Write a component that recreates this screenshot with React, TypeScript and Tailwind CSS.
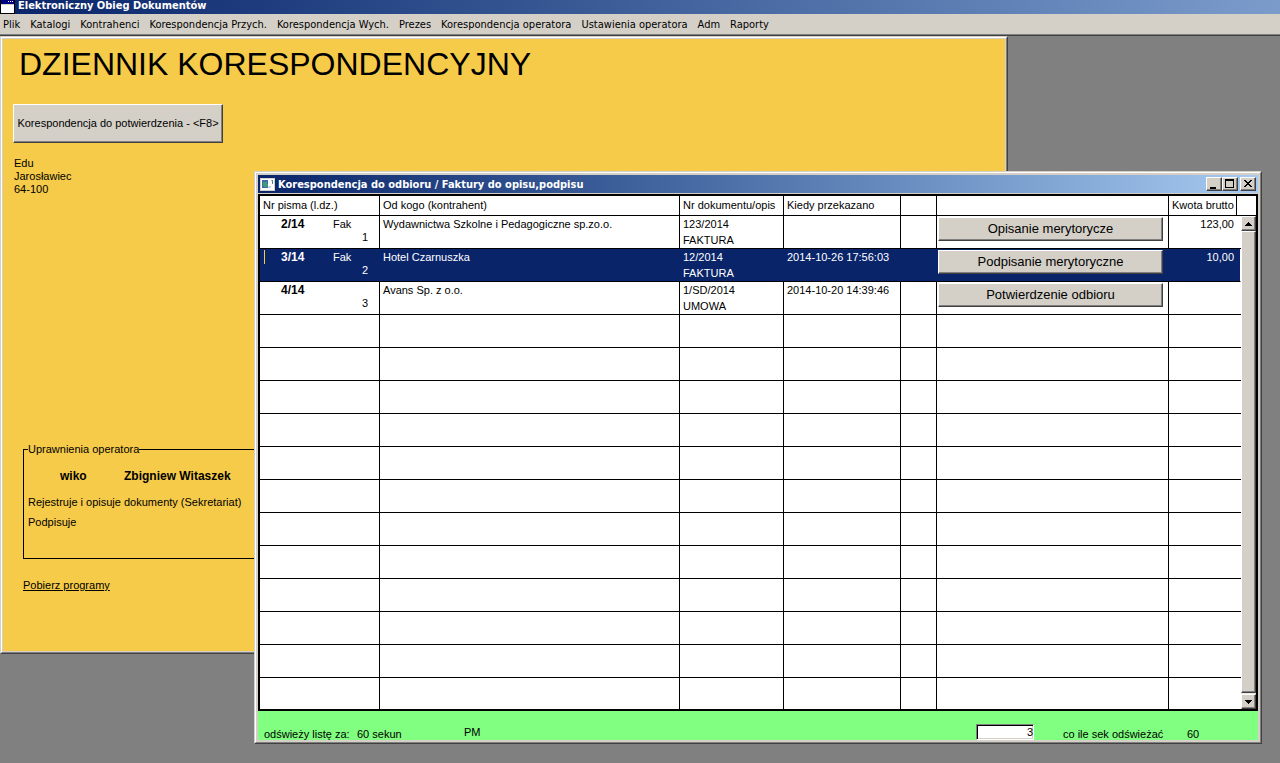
import * as React from "react";

const menu = [
	"Plik",
	"Katalogi",
	"Kontrahenci",
	"Korespondencja Przych.",
	"Korespondencja Wych.",
	"Prezes",
	"Korespondencja operatora",
	"Ustawienia operatora",
	"Adm",
	"Raporty",
];

type Letter = {
	nr: string;
	kind: string;
	lp: number;
	from: string;
	doc: string;
	desc: string;
	date: string;
	action: string;
	amount: string;
	selected?: boolean;
};

const letters: Letter[] = [
	{
		nr: "2/14",
		kind: "Fak",
		lp: 1,
		from: "Wydawnictwa Szkolne i Pedagogiczne sp.zo.o.",
		doc: "123/2014",
		desc: "FAKTURA",
		date: "",
		action: "Opisanie merytorycze",
		amount: "123,00",
	},
	{
		nr: "3/14",
		kind: "Fak",
		lp: 2,
		from: "Hotel Czarnuszka",
		doc: "12/2014",
		desc: "FAKTURA",
		date: "2014-10-26 17:56:03",
		action: "Podpisanie merytoryczne",
		amount: "10,00",
		selected: true,
	},
	{
		nr: "4/14",
		kind: "",
		lp: 3,
		from: "Avans Sp. z o.o.",
		doc: "1/SD/2014",
		desc: "UMOWA",
		date: "2014-10-20 14:39:46",
		action: "Potwierdzenie odbioru",
		amount: "",
	},
];

const emptyRows = Array.from({ length: 12 }, (_, i) => i);

const raised =
	"bg-[#d4d0c8] border border-t-white border-l-white border-r-[#404040] border-b-[#404040] shadow-[inset_-1px_-1px_0_#808080]";

const tahoma = "font-['DejaVu_Sans_Condensed','DejaVu_Sans',sans-serif]";

const AppIcon = () => (
	<svg className="w-4 h-4 shrink-0" viewBox="0 0 16 16" shapeRendering="crispEdges">
		<rect width="15" height="16" fill="#000" />
		<rect x="1" y="1" width="13" height="14" fill="#fff" />
		<rect x="1" y="1" width="13" height="5" fill="#000080" />
		<path d="M8 3h1v1H8zM10 3h1v1h-1zM12 3h1v1h-1z" fill="#fff" />
		<path d="M1 6h13v1H1z" fill="#d4d0c8" />
	</svg>
);

const WindowIcon = () => (
	<svg className="w-4 h-4 shrink-0" viewBox="0 0 16 16" shapeRendering="crispEdges">
		<rect y="2" width="15" height="13" fill="#d4d0c8" />
		<rect x="1" y="3" width="13" height="11" fill="#fff" />
		<rect x="2" y="4" width="6" height="8" fill="#3c6ea5" />
		<path d="M3 6h4v2h1v3H4v-1H3z" fill="#3f9a78" />
		<rect x="8" y="10" width="3" height="2" fill="#c8d8e8" />
		<path d="M12 4h1v4h-1z" fill="#4c8c8c" />
		<path d="M11 4h1v1h-1z" fill="#8cb4c8" />
	</svg>
);

const TitleButton = ({ label, children }: { label: string; children: React.ReactNode }) => (
	<button type="button" aria-label={label} className={`w-4 h-3.5 ${raised}`}>
		<svg className="w-3.5 h-3" viewBox="0 0 14 12" shapeRendering="crispEdges">
			{children}
		</svg>
	</button>
);

const MainWindow = () => (
	<section className="mr-[272px] border border-t-[#d4d0c8] border-l-[#d4d0c8] border-r-[#404040] border-b-[#404040]">
		<div className="border border-t-white border-l-white border-r-[#808080] border-b-[#808080] bg-[#d4d0c8] p-px">
			<div className="bg-[#f6cb4a] pt-[5px] pb-[59px] px-2.5">
				<h1 className="pl-1.5 text-[32px] leading-10 whitespace-nowrap">DZIENNIK KORESPONDENCYJNY</h1>
				<button type="button" className={`mt-5 w-[210px] h-[39px] whitespace-nowrap ${raised}`}>
					Korespondencja do potwierdzenia - &lt;F8&gt;
				</button>
				<address className="mt-3.5 pl-px not-italic leading-[13px]">
					<div>Edu</div>
					<div>Jarosławiec</div>
					<div>64-100</div>
				</address>
				<fieldset className="mt-[247px] ml-2.5 w-[320px] border border-black px-1">
					<legend className="leading-[13px]">Uprawnienia operatora</legend>
					<div className="mt-3 flex pl-8 text-[12px] leading-4 font-bold">
						<span className="w-16">wiko</span>
						<span>Zbigniew Witaszek</span>
					</div>
					<p className="mt-2 leading-5">Rejestruje i opisuje dokumenty (Sekretariat)</p>
					<p className="mb-[26px] leading-5">Podpisuje</p>
				</fieldset>
				<a href="#programy" className="mt-[19px] ml-2.5 block w-fit leading-[14px] underline">
					Pobierz programy
				</a>
			</div>
		</div>
	</section>
);

const ScrollBar = () => (
	<div className="w-[15px] shrink-0 flex flex-col">
		<div className="h-5 bg-white border-b border-black"></div>
		<button type="button" aria-label="W górę" className={`h-[15px] flex items-center justify-center ${raised}`}>
			<svg className="w-[7px] h-1" viewBox="0 0 7 4" shapeRendering="crispEdges">
				<path d="M3 0h1v1h1v1h1v1h1v1H0V3h1V2h1V1h1z" />
			</svg>
		</button>
		<div className={`flex-1 ${raised}`}></div>
		<div className="h-px bg-[#eae8e4]"></div>
		<button type="button" aria-label="W dół" className={`h-[15px] flex items-center justify-center ${raised}`}>
			<svg className="w-[7px] h-1" viewBox="0 0 7 4" shapeRendering="crispEdges">
				<path d="M0 0h7v1H6v1H5v1H4v1H3V3H2V2H1V1H0z" />
			</svg>
		</button>
	</div>
);

const cell = "border-r border-b border-black px-[3px] align-top";
const selectedCell = "border-r border-b border-r-[#0a246a] border-b-black px-[3px] align-top";
const headCell = "border-r border-b border-black px-[3px] pt-px align-top font-normal";

const LetterRow = ({ letter }: { letter: Letter }) => {
	const td = letter.selected ? selectedCell : cell;

	return (
		<tr className={letter.selected ? "h-[33px] bg-[#0a246a] text-white" : "h-[33px]"}>
			<td className={td}>
				<div className="flex">
					<span className="w-[18px] pl-px py-px">
						{letter.selected && <span className="block h-3.5 border-l border-[#f6cb4a]"></span>}
					</span>
					<b className="w-[52px] text-[12px]">{letter.nr}</b>
					<span>{letter.kind}</span>
				</div>
				<div className="pr-2 text-right leading-[10px]">{letter.lp}</div>
			</td>
			<td className={td}>{letter.from}</td>
			<td className={td}>
				<div>{letter.doc}</div>
				<div>{letter.desc}</div>
			</td>
			<td className={td}>{letter.date}</td>
			<td className={td}></td>
			<td
				className={
					letter.selected
						? "border-r border-b border-r-[#0a246a] border-b-black pl-px pr-[5px] pt-px align-top"
						: "border-r border-b border-black pl-px pr-[5px] pt-px align-top"
				}
			>
				<button type="button" className={`block w-full h-6 text-[13px] text-black ${raised}`}>
					{letter.action}
				</button>
			</td>
			<td
				colSpan={2}
				className={
					letter.selected
						? "border-r border-b border-r-white border-b-black pr-1.5 text-right align-top"
						: "border-b border-black pr-[7px] text-right align-top"
				}
			>
				{letter.amount}
			</td>
		</tr>
	);
};

const LettersTable = () => (
	<table className="w-full min-w-0 flex-1 table-fixed border-separate border-spacing-0 bg-white leading-4 whitespace-nowrap">
		<colgroup>
			<col className="w-[120px]" />
			<col />
			<col className="w-[104px]" />
			<col className="w-[117px]" />
			<col className="w-9" />
			<col className="w-[232px]" />
			<col className="w-[68px]" />
			<col className="w-1" />
		</colgroup>
		<thead>
			<tr className="h-5 text-left">
				<th className={headCell}>Nr pisma (l.dz.)</th>
				<th className={headCell}>Od kogo (kontrahent)</th>
				<th className={headCell}>Nr dokumentu/opis</th>
				<th className={headCell}>Kiedy przekazano</th>
				<td className={headCell}></td>
				<td className={headCell}></td>
				<th className={headCell}>Kwota brutto</th>
				<td className="border-b border-black"></td>
			</tr>
		</thead>
		<tbody>
			{letters.map((l) => (
				<LetterRow key={l.nr} letter={l} />
			))}
			{emptyRows.map((i) => (
				<tr key={i} className="h-[33px] last:h-[31px] [&:last-child>td]:border-b-0">
					<td className={cell}></td>
					<td className={cell}></td>
					<td className={cell}></td>
					<td className={cell}></td>
					<td className={cell}></td>
					<td className={cell}></td>
					<td colSpan={2} className="border-b border-black"></td>
				</tr>
			))}
		</tbody>
	</table>
);

const LettersWindow = () => (
	<section className="absolute left-[254px] right-[18px] top-[135px] border border-t-[#d4d0c8] border-l-[#d4d0c8] border-r-[#404040] border-b-[#404040]">
		<div className="border border-t-white border-l-white border-r-[#808080] border-b-[#808080] bg-[#d4d0c8] p-0.5">
			<header className="h-[18px] mb-px flex items-center bg-linear-to-r from-[#0a246a] to-[#a6caf0] px-0.5">
				<WindowIcon />
				<h2 className={`flex-1 pt-0.5 pl-0.5 leading-4 font-bold text-white whitespace-nowrap ${tahoma}`}>
					Korespondencja do odbioru / Faktury do opisu,podpisu
				</h2>
				<TitleButton label="Minimalizuj">
					<path d="M3 9h6v2H3z" />
				</TitleButton>
				<TitleButton label="Maksymalizuj">
					<path d="M2 1h9v9H2zM3 3v6h7V3z" fillRule="evenodd" />
				</TitleButton>
				<span className="w-0.5"></span>
				<TitleButton label="Zamknij">
					<path d="M3 2h2v1h1v1h2V3h1V2h2v1h-1v1H9v1H8v1h1v1h1v1h1v1H9V8H8V7H6v1H5v1H3V8h1V7h1V6h1V5H5V4H4V3H3z" />
				</TitleButton>
			</header>
			<div className="flex border-2 border-black">
				<LettersTable />
				<ScrollBar />
			</div>
			<footer className="h-[29px] flex items-end bg-[#80ff80] pl-1.5 leading-[11px] whitespace-nowrap">
				<span className="w-[93px]">odświeży listę za:</span>
				<span className="w-[107px]">60 sekun</span>
				<span className="mb-0.5">PM</span>
				<input
					aria-label="Liczba pism"
					defaultValue="3"
					className="ml-auto w-[58px] h-4 border border-t-[#808080] border-l-[#808080] border-r-white border-b-white bg-white text-right shadow-[inset_1px_1px_0_#000,inset_-1px_-1px_0_#d4d0c8] outline-none"
				/>
				<span className="ml-[29px] w-[124px]">co ile sek odświeżać</span>
				<span className="w-[71px]">60</span>
			</footer>
		</div>
	</section>
);

const App = () => {
	return (
		<div className="min-h-screen flex flex-col overflow-hidden bg-[#808080] font-['Liberation_Sans',Arial,sans-serif] text-[11px] text-black">
			<header className={`h-3.5 flex items-end overflow-hidden bg-linear-to-r from-[#0a246a] to-[#7b9ccb] ${tahoma}`}>
				<AppIcon />
				<span className="pl-0.5 leading-[17px] font-bold text-white whitespace-nowrap">Elektroniczny Obieg Dokumentów</span>
			</header>
			<nav
				className={`h-[22px] flex items-center gap-2.5 border-b border-[#404040] bg-[#d4d0c8] pt-0.5 px-[3px] shadow-[inset_0_-1px_0_#808080] ${tahoma}`}
			>
				{menu.map((m) => (
					<button type="button" key={m} className="whitespace-nowrap">
						{m}
					</button>
				))}
			</nav>
			<main className="relative flex-1">
				<MainWindow />
				<LettersWindow />
			</main>
		</div>
	);
};

export default App;
